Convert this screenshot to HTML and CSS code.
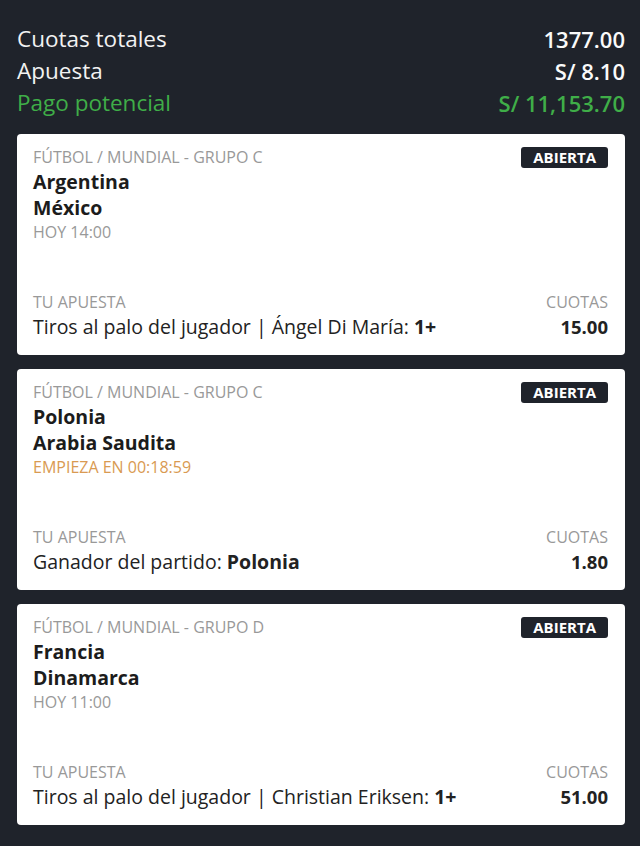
FILE: index.html
```html
<!DOCTYPE html>
<html lang="es">
  <head>
    <meta charset="UTF-8" />
    <meta name="viewport" content="width=device-width, initial-scale=1.0" />
    <title>Apuesta combinada</title>
    <link rel="stylesheet" href="styles.css">
  </head>
  <body>
    <div class="summary">
      <div class="summary-row">
        <span>Cuotas totales</span>
        <span class="value">1377.00</span>
      </div>
      <div class="summary-row">
        <span>Apuesta</span>
        <span class="value">S/ 8.10</span>
      </div>
      <div class="summary-row payout">
        <span>Pago potencial</span>
        <span class="value">S/ 11,153.70</span>
      </div>
    </div>

    <div class="bets">
      <div class="bet-card">
        <div class="event">
          <div class="event-info">
            <p class="league">FÚTBOL / MUNDIAL - GRUPO C</p>
            <p class="team">Argentina</p>
            <p class="team">México</p>
            <p class="time">HOY 14:00</p>
          </div>
          <span class="badge">ABIERTA</span>
        </div>
        <div class="selection">
          <div>
            <p class="caption">TU APUESTA</p>
            <p class="pick">Tiros al palo del jugador | Ángel Di María: <b>1+</b></p>
          </div>
          <div class="odds">
            <p class="caption">CUOTAS</p>
            <p class="odds-value">15.00</p>
          </div>
        </div>
      </div>

      <div class="bet-card">
        <div class="event">
          <div class="event-info">
            <p class="league">FÚTBOL / MUNDIAL - GRUPO C</p>
            <p class="team">Polonia</p>
            <p class="team">Arabia Saudita</p>
            <p class="time starting">EMPIEZA EN 00:18:59</p>
          </div>
          <span class="badge">ABIERTA</span>
        </div>
        <div class="selection">
          <div>
            <p class="caption">TU APUESTA</p>
            <p class="pick">Ganador del partido: <b>Polonia</b></p>
          </div>
          <div class="odds">
            <p class="caption">CUOTAS</p>
            <p class="odds-value">1.80</p>
          </div>
        </div>
      </div>

      <div class="bet-card">
        <div class="event">
          <div class="event-info">
            <p class="league">FÚTBOL / MUNDIAL - GRUPO D</p>
            <p class="team">Francia</p>
            <p class="team">Dinamarca</p>
            <p class="time">HOY 11:00</p>
          </div>
          <span class="badge">ABIERTA</span>
        </div>
        <div class="selection">
          <div>
            <p class="caption">TU APUESTA</p>
            <p class="pick">Tiros al palo del jugador | Christian Eriksen: <b>1+</b></p>
          </div>
          <div class="odds">
            <p class="caption">CUOTAS</p>
            <p class="odds-value">51.00</p>
          </div>
        </div>
      </div>
    </div>
  </body>
</html>
```

FILE: styles.css
```css
body {
  margin: 0;
  background-color: #1f232b;
  color: #f2f2f2;
  font-family: "Open Sans", "Noto Sans", sans-serif;
  padding: 23px 15px 22px 17px;
}
p {
  margin: 0;
}
.summary {
  margin-bottom: 15px;
}
.summary-row {
  display: flex;
  justify-content: space-between;
  font-size: 22.5px;
  line-height: 32px;
}
.summary-row .value {
  font-size: 22px;
  font-weight: 600;
  color: #fafafa;
}
.summary-row.payout,
.summary-row.payout .value {
  color: #3fae48;
}
.bets {
  display: flex;
  flex-direction: column;
  gap: 14px;
}
.bet-card {
  background-color: #fff;
  border-radius: 4px;
  padding: 12px 17px 15px 16px;
  color: #222;
  height: 194px;
  display: flex;
  flex-direction: column;
  justify-content: space-between;
}
.event {
  display: flex;
  justify-content: space-between;
  align-items: flex-start;
}
.league,
.time,
.caption {
  font-size: 16px;
  line-height: 24px;
  color: #999;
}
.league {
  line-height: 23px;
}
.time {
  line-height: 22px;
}
.time.starting {
  color: #d99a52;
}
.team {
  font-size: 19.5px;
  line-height: 26px;
  font-weight: 700;
  color: #1c1c1c;
}
.badge {
  background-color: #1f232b;
  color: #fff;
  font-size: 15px;
  font-weight: 700;
  line-height: 21px;
  padding: 0 12px;
  border-radius: 3px;
  margin-top: 1px;
}
.selection {
  display: flex;
  justify-content: space-between;
  align-items: flex-end;
}
.caption {
  line-height: 22px;
}
.pick {
  font-size: 19.5px;
  line-height: 27px;
  color: #222;
}
.odds {
  text-align: right;
}
.odds-value {
  font-size: 18.5px;
  line-height: 27px;
  font-weight: 700;
  color: #222;
}
```
